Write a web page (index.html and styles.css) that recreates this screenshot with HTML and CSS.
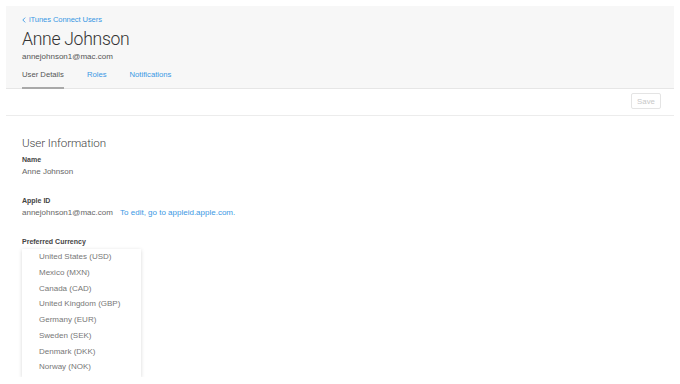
FILE: index.html
```html
<!DOCTYPE html>
<html lang="en">
<head>
    <meta charset="UTF-8">
    <title>Anne Johnson - iTunes Connect Users</title>
    <link rel="stylesheet" href="styles.css">
</head>
<body>
    <div class="page">
        <header class="head">
            <a class="back" href="#">
                <svg class="chev" width="4" height="6" viewBox="0 0 4 6"><path d="M3.2 0.6 L0.8 3 L3.2 5.4" fill="none" stroke="#3a98e4" stroke-width="0.9"/></svg>
                iTunes Connect Users
            </a>
            <h1 class="name">Anne Johnson</h1>
            <div class="email">annejohnson1@mac.com</div>
            <nav class="tabs">
                <a class="tab active" href="#">User Details</a>
                <a class="tab" href="#">Roles</a>
                <a class="tab" href="#">Notifications</a>
            </nav>
        </header>

        <div class="toolbar">
            <button class="save" disabled>Save</button>
        </div>

        <section class="info">
            <h2 class="section-title">User Information</h2>

            <div class="field">
                <div class="label">Name</div>
                <div class="value">Anne Johnson</div>
            </div>

            <div class="field">
                <div class="label">Apple ID</div>
                <div class="value">annejohnson1@mac.com <a class="link" href="#">To edit, go to appleid.apple.com.</a></div>
            </div>

            <div class="field">
                <div class="label">Preferred Currency</div>
                <ul class="menu">
                    <li>United States (USD)</li>
                    <li>Mexico (MXN)</li>
                    <li>Canada (CAD)</li>
                    <li>United Kingdom (GBP)</li>
                    <li>Germany (EUR)</li>
                    <li>Sweden (SEK)</li>
                    <li>Denmark (DKK)</li>
                    <li>Norway (NOK)</li>
                </ul>
            </div>
        </section>
    </div>
</body>
</html>
```

FILE: styles.css
```css
body, html {
    margin: 0;
    padding: 0;
    background: #fff;
    font-family: 'Liberation Sans', Arial, sans-serif;
    color: #555;
    overflow: hidden;
}

.page {
    padding: 6px 6px 0 6px;
}

.head {
    background: #f7f7f7;
    padding: 9px 16px 0 16px;
    border-bottom: 1px solid #e6e6e6;
}

.back {
    display: flex;
    align-items: center;
    gap: 3px;
    color: #3a98e4;
    text-decoration: none;
    font-size: 7.6px;
    line-height: 10px;
    letter-spacing: -0.1px;
}

.chev {
    display: block;
}

.name {
    margin: 3px 0 0 0;
    font-family: Roboto, sans-serif;
    font-weight: 300;
    font-size: 17.6px;
    line-height: 22px;
    color: #333;
    letter-spacing: -0.3px;
}

.email {
    margin-top: 1px;
    font-size: 8px;
    line-height: 12px;
    color: #555;
}

.tabs {
    display: flex;
    gap: 23px;
    margin-top: 6px;
}

.tab {
    font-size: 7.7px;
    line-height: 12px;
    padding-bottom: 6px;
    color: #3a98e4;
    text-decoration: none;
    border-bottom: 2px solid transparent;
    margin-bottom: -1px;
}

.tab.active {
    color: #555;
    border-bottom-color: #a9a9a9;
}

.toolbar {
    display: flex;
    justify-content: flex-end;
    padding: 4px 13px 6px 0;
    border-bottom: 1px solid #ececec;
}

.save {
    width: 30px;
    height: 16px;
    padding: 0;
    background: #fff;
    border: 1px solid #e4e4e4;
    border-radius: 2px;
    font-family: inherit;
    font-size: 7.8px;
    color: #c8c8c8;
}

.info {
    padding: 0 16px;
}

.section-title {
    margin: 20px 0 0 0;
    font-family: Roboto, sans-serif;
    font-weight: 300;
    font-size: 11.6px;
    line-height: 14px;
    color: #444;
    letter-spacing: -0.1px;
}

.field {
    margin-top: 19px;
}

.section-title + .field {
    margin-top: 5px;
}

.label {
    font-size: 7px;
    font-weight: bold;
    line-height: 10px;
    color: #444;
}

.value {
    margin-top: 2px;
    font-size: 8px;
    line-height: 10px;
    color: #666;
}

.link {
    margin-left: 5px;
    color: #3a98e4;
    text-decoration: none;
}

.menu {
    list-style: none;
    margin: 2px 0 0 0;
    padding: 0 0 2px 0;
    width: 119px;
    background: #fff;
    box-shadow: 0 1px 4px rgba(0, 0, 0, 0.16);
}

.menu li {
    padding-left: 17px;
    font-size: 8px;
    line-height: 15.75px;
    color: #777;
}
```
